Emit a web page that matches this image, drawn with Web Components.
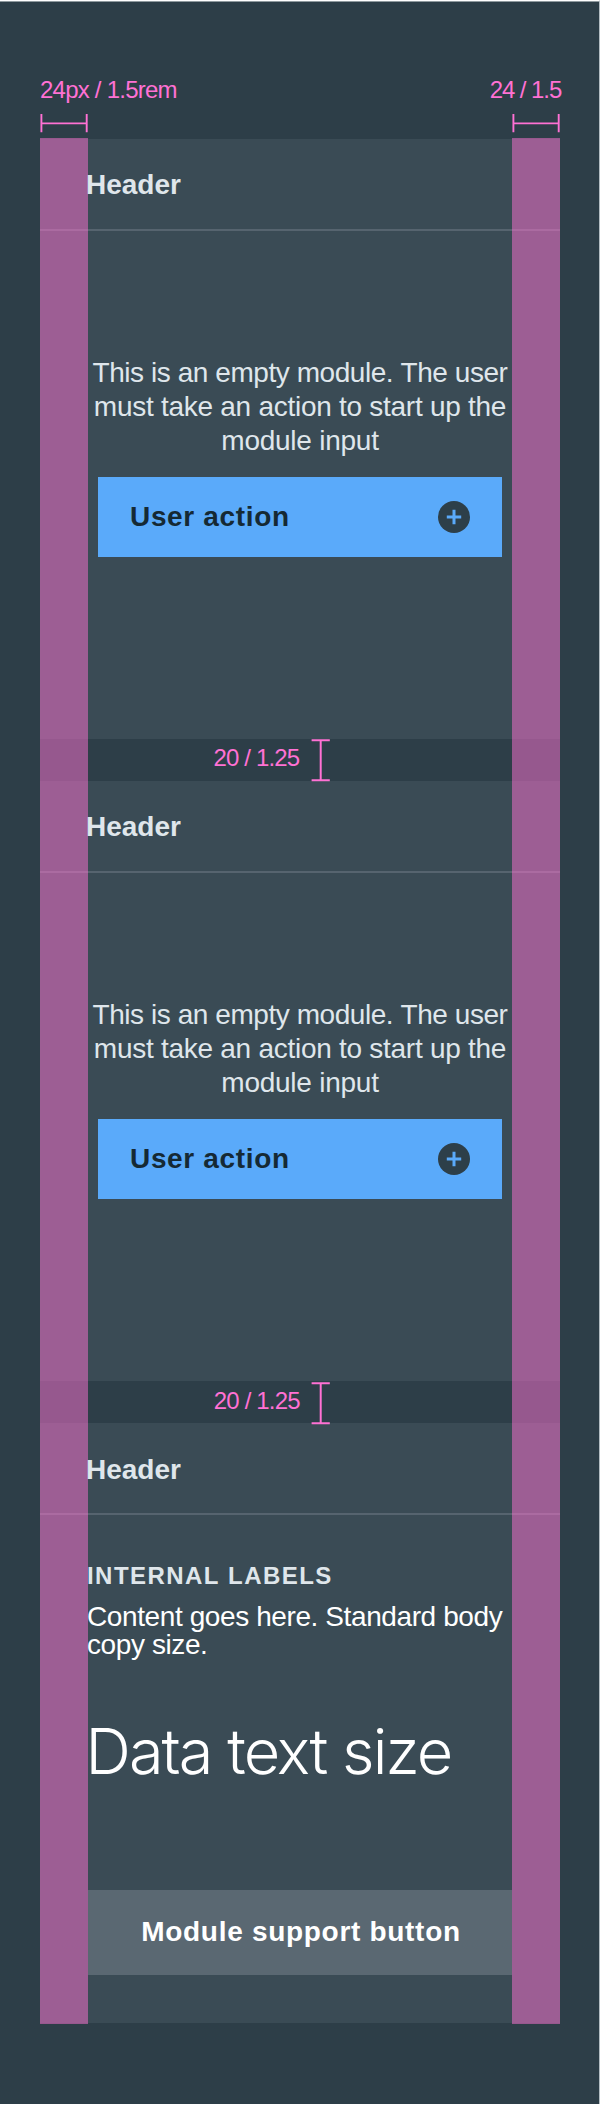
<!DOCTYPE html>
<html lang="en">
<head>
<meta charset="utf-8">
<title>Module spacing</title>
<style>
html,body{margin:0;background:#fff}
body{font-family:"Liberation Sans",Arial,sans-serif;font-kerning:none}
</style>
</head>
<body>
<spec-sheet>
  <width-guide slot="guides" label="24px / 1.5rem"></width-guide>
  <width-guide slot="guides" label="24 / 1.5" end></width-guide>
  <module-card heading="Header">
    <empty-state></empty-state>
  </module-card>
  <gap-guide label="20 / 1.25"></gap-guide>
  <module-card heading="Header">
    <empty-state></empty-state>
  </module-card>
  <gap-guide label="20 / 1.25" low></gap-guide>
  <module-card heading="Header" low>
    <data-content></data-content>
  </module-card>
</spec-sheet>
<script>
const define = (name, html, setup) => customElements.define(name, class extends HTMLElement {
  constructor() {
    super();
    const t = document.createElement('template');
    t.innerHTML = html;
    this.attachShadow({mode: 'open'}).append(t.content.cloneNode(true));
  }
  connectedCallback() { if (setup) setup(this, this.shadowRoot); }
});
const setLabel = (el, root) => { root.querySelector('.label').textContent = el.getAttribute('label'); };

define('spec-sheet', `<style>
:host{display:block;box-sizing:border-box;width:600px;height:2104px;background:#2d3e48;border-top:1px solid #fff;border-right:1px solid #b3bdc3;box-shadow:inset 0 1px #8f9a9f}
.top{display:flex;justify-content:space-between;box-sizing:border-box;height:138px;padding:75px 39px 0 40px}
.stack{position:relative;margin:0 39px 0 40px}
.margin{position:absolute;top:-1px;bottom:-1px;width:48px;background:#ff71d480;pointer-events:none;z-index:1}
.left{left:0}.right{right:0}
</style>
<div class="top"><slot name="guides"></slot></div>
<div class="stack"><slot></slot><div class="margin left"></div><div class="margin right"></div></div>`);

define('width-guide', `<style>
:host{display:flex;flex-direction:column;gap:10px;width:48px;color:#ff71d4}
:host([end]){align-items:flex-end}
.label{font-size:24px;line-height:28px;white-space:nowrap;letter-spacing:-.77px}
:host([end]) .label{letter-spacing:-1.07px;margin-right:-1.2px}
svg{display:block;width:48px;height:20px}
path{fill:none;stroke:currentColor;stroke-width:1.9}
</style>
<span class="label"></span>
<svg viewBox="0 0 48 20"><path d="M1.4 0V18.2M46.7 0V18.2M1.4 9.4H46.7"/></svg>`, setLabel);

define('gap-guide', `<style>
:host{display:flex;height:42px;color:#ff71d4;padding-left:173.5px;gap:12px}
:host([low]){padding-left:173.8px}
.label{width:85.3px;font-size:24px;line-height:38px;white-space:nowrap;letter-spacing:-.84px}
:host([low]) .label{line-height:40px}
svg{display:block;width:20px;height:44px}
:host([low]) svg{margin-top:.6px}
path{fill:none;stroke:currentColor;stroke-width:2}
</style>
<span class="label"></span>
<svg viewBox="0 0 20 44"><path d="M.6 1.2H18.8M.6 41.2H18.8M9.7 1.2V41.2"/></svg>`, setLabel);

define('module-card', `<style>
:host{display:block;height:600px;background:#3a4b55}
h2{position:relative;z-index:2;box-sizing:border-box;height:90px;margin:0;padding-left:46px;font-size:28px;line-height:92px;font-weight:700;color:#dfe6eb}
:host([low]) h2{line-height:94px}
hr{height:2px;border:0;margin:0;background:#56646f}
</style>
<h2></h2><hr><slot></slot>`, (el, root) => { root.querySelector('h2').textContent = el.getAttribute('heading'); });

define('empty-state', `<style>
:host{display:flex;flex-direction:column;align-items:center;padding-top:125px;gap:19px}
p{margin:0;font-size:28px;line-height:34px;text-align:center;white-space:nowrap;color:#dfe6eb;letter-spacing:-.44px}
.mid{letter-spacing:-.27px}
.last{letter-spacing:-.25px}
</style>
<p>This is an empty module. The user<br><span class="mid">must take an action to start up the</span><br><span class="last">module input</span></p>
<action-button>User action</action-button>`);

define('action-button', `<style>
:host{display:block;width:404px}
button{display:flex;align-items:center;justify-content:space-between;width:100%;height:80px;border:0;padding:0 32px;background:#5aaafa;color:#152934;font:700 28px/79px "Liberation Sans",Arial,sans-serif;letter-spacing:.66px;font-kerning:none}
span{padding-bottom:2px}
svg{width:32px;height:32px}
</style>
<button><span><slot></slot></span><svg viewBox="0 0 32 32"><circle cx="16" cy="16" r="16" fill="#2d3f49"/><path d="M8.8 16H23.2M16 8.8V23.2" stroke="#5aaafa" stroke-width="3"/></svg></button>`);

define('data-content', `<style>
:host{display:block;position:relative;z-index:2;padding:47px 48px 0}
h3{margin:0 0 13px -1px;font-size:24px;line-height:28px;letter-spacing:1.45px;color:#dfe6eb;white-space:nowrap}
p{margin:0 0 0 -1px;font-size:28px;line-height:28px;letter-spacing:-.4px;color:#fff;white-space:nowrap}
.data{margin:52px 0 99px -2.5px;font:300 63px/80px Inter,"Liberation Sans",sans-serif;letter-spacing:-1.92px;color:#fff;white-space:nowrap}
button{display:block;width:424px;height:84.5px;padding:0 0 0 2px;border:0;background:#5a6872;color:#fff;font:700 28px/82px "Liberation Sans",Arial,sans-serif;letter-spacing:.7px;font-kerning:none;text-align:center}
</style>
<h3>INTERNAL LABELS</h3>
<p>Content goes here. Standard body<br>copy size.</p>
<div class="data">Data text size</div>
<button>Module support button</button>`);
</script>
</body>
</html>
